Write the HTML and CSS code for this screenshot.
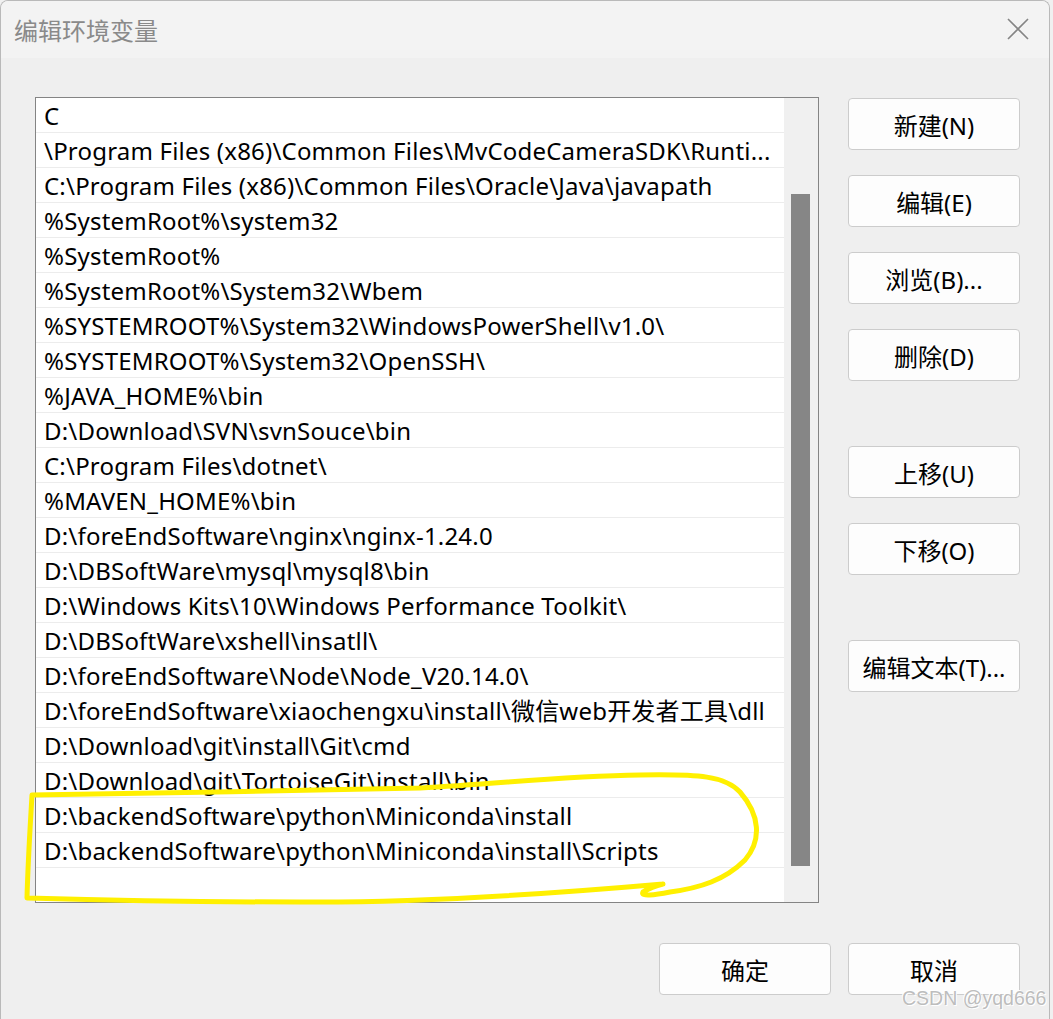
FILE: index.html
```html
<!DOCTYPE html>
<html>
<head>
	<title>编辑环境变量</title>
	<link rel="stylesheet" href="styles.css">
</head>
<body>
<div class="window">
	<div class="titleBar">
		<span class="title">编辑环境变量</span>
		<svg class="closeIcon" width="22" height="22" viewBox="0 0 22 22">
			<path d="M1 1 L21 21 M21 1 L1 21" stroke="#858585" stroke-width="1.6" fill="none"/>
		</svg>
	</div>

	<div class="content">
		<div class="listBox">
			<div class="rows">
				<div class="row">C</div>
				<div class="row">\Program Files (x86)\Common Files\MvCodeCameraSDK\Runti...</div>
				<div class="row">C:\Program Files (x86)\Common Files\Oracle\Java\javapath</div>
				<div class="row">%SystemRoot%\system32</div>
				<div class="row">%SystemRoot%</div>
				<div class="row">%SystemRoot%\System32\Wbem</div>
				<div class="row">%SYSTEMROOT%\System32\WindowsPowerShell\v1.0\</div>
				<div class="row">%SYSTEMROOT%\System32\OpenSSH\</div>
				<div class="row">%JAVA_HOME%\bin</div>
				<div class="row">D:\Download\SVN\svnSouce\bin</div>
				<div class="row">C:\Program Files\dotnet\</div>
				<div class="row">%MAVEN_HOME%\bin</div>
				<div class="row">D:\foreEndSoftware\nginx\nginx-1.24.0</div>
				<div class="row">D:\DBSoftWare\mysql\mysql8\bin</div>
				<div class="row">D:\Windows Kits\10\Windows Performance Toolkit\</div>
				<div class="row">D:\DBSoftWare\xshell\insatll\</div>
				<div class="row">D:\foreEndSoftware\Node\Node_V20.14.0\</div>
				<div class="row">D:\foreEndSoftware\xiaochengxu\install\微信web开发者工具\dll</div>
				<div class="row">D:\Download\git\install\Git\cmd</div>
				<div class="row">D:\Download\git\TortoiseGit\install\bin</div>
				<div class="row">D:\backendSoftware\python\Miniconda\install</div>
				<div class="row">D:\backendSoftware\python\Miniconda\install\Scripts</div>
				<div class="row last"></div>
			</div>
			<div class="scrollTrack">
				<div class="scrollThumb"></div>
			</div>
		</div>

		<div class="sideButtons">
			<div class="group">
				<button class="btn">新建(N)</button>
				<button class="btn">编辑(E)</button>
				<button class="btn">浏览(B)...</button>
				<button class="btn">删除(D)</button>
			</div>
			<div class="group">
				<button class="btn">上移(U)</button>
				<button class="btn">下移(O)</button>
			</div>
			<div class="group">
				<button class="btn">编辑文本(T)...</button>
			</div>
		</div>
	</div>

	<div class="footer">
		<button class="btn">确定</button>
		<button class="btn">取消</button>
	</div>

	<!-- highlight scribble drawn over the screenshot -->
	<svg class="scribble" width="1053" height="1019" viewBox="0 0 1053 1019">
		<path d="M663 884 C560 893 420 903 300 902 C200 902 100 900 27 898 C28 860 30 830 32 795 C150 793 300 791 420 788 C500 784 560 776 640 775 C700 774 725 776 740 792 C760 815 762 840 745 860 C725 880 700 888 670 892 C655 895 640 897 643 892 C648 889 655 886 663 884" stroke="#fff000" stroke-width="5" fill="none" stroke-linecap="round" stroke-linejoin="round"/>
	</svg>

	<div class="watermark">CSDN @yqd666</div>
</div>
</body>
</html>
```

FILE: styles.css
```css
body {
	margin: 0;
	background-color: #f0f0f0;
	font-family: "Noto Sans", "Noto Sans CJK SC", sans-serif;
}

.window {
	position: relative;
	width: 1050px;
	height: 1019px;
	box-sizing: border-box;
	border-top: 1px solid #b9b9b9;
	border-left: 1px solid #b9b9b9;
	border-right: 1px solid #b9b9b9;
	border-radius: 8px 8px 0 0;
	background-color: #efefef;
	overflow: hidden;
}

.titleBar {
	height: 57px;
	display: flex;
	align-items: center;
	justify-content: space-between;
	padding: 0 20px 0 13px;
	background-color: #f3f3f3;
}

.title {
	font-family: "Noto Sans CJK SC", sans-serif;
	font-size: 24px;
	color: #8a8a8a;
	margin-top: -1px;
}

.closeIcon {
	margin-top: -1px;
}

.content {
	display: flex;
	padding: 39px 0 0 34px;
}

.listBox {
	display: flex;
	width: 784px;
	height: 806px;
	box-sizing: border-box;
	border: 1px solid #848484;
	background-color: #ffffff;
}

.rows {
	flex: 1;
}

.row {
	height: 35px;
	box-sizing: border-box;
	border-bottom: 1px solid #ececec;
	padding: 1px 0 0 8px;
	font-size: 24px;
	letter-spacing: 0.2px;
	line-height: 33px;
	color: #000000;
	white-space: nowrap;
	overflow: hidden;
}

.row.last {
	border-bottom: none;
}

.scrollTrack {
	width: 34px;
	background-color: #f0f0f0;
	padding: 96px 0 0 7px;
	box-sizing: border-box;
}

.scrollThumb {
	width: 19px;
	height: 672px;
	background-color: #868686;
}

.sideButtons {
	display: flex;
	flex-direction: column;
	gap: 65px;
	margin-left: 29px;
	padding-top: 1px;
}

.group {
	display: flex;
	flex-direction: column;
	gap: 25px;
}

.btn {
	width: 172px;
	height: 52px;
	box-sizing: border-box;
	border: 1px solid #cccccc;
	border-radius: 4px;
	background-color: #fdfdfd;
	font-family: "Noto Sans", "Noto Sans CJK SC", sans-serif;
	font-size: 24px;
	color: #000000;
	padding: 0;
}

.footer {
	display: flex;
	justify-content: flex-end;
	gap: 17px;
	padding: 40px 29px 0 0;
}

.scribble {
	position: absolute;
	left: -1px;
	top: -1px;
	pointer-events: none;
}

.watermark {
	position: absolute;
	left: 901px;
	top: 986px;
	font-family: "Liberation Sans", Arial, sans-serif;
	font-size: 19.5px;
	color: #bdbdbd;
	text-shadow: 1px 1px 0 #ffffff, -1px -1px 0 #ffffff;
	white-space: nowrap;
}
```
